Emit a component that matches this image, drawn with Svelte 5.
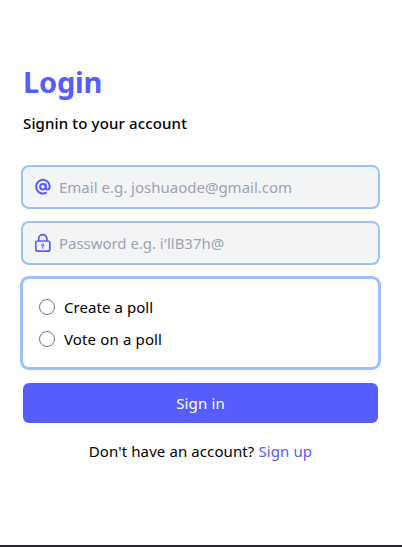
<script>
  let email = $state('');
  let password = $state('');
  let action = $state('');
</script>

<main>
  <h1>Login</h1>
  <h2>Signin to your account</h2>
  <form onsubmit={(e) => e.preventDefault()}>
    <label class="field">
      <svg width="18" height="18" viewBox="0 0 18 18" fill="none" stroke="currentColor" stroke-width="2">
        <circle cx="8.9" cy="8.7" r="2.8" />
        <path d="M11.7 5.4v4.5c0 2.5 4 2.2 4-1.5A6.8 6.8 0 1 0 12.7 14.3" />
      </svg>
      <input class="mail" type="text" placeholder="Email e.g. joshuaode@gmail.com" bind:value={email} />
    </label>
    <label class="field">
      <svg width="18" height="20" viewBox="0 0 18 20" fill="none" stroke="currentColor" stroke-width="1.7">
        <rect x="1.8" y="8" width="14" height="10.2" rx="2" />
        <path d="M4.7 8V5.8a4.1 4.1 0 0 1 8.2 0V8" />
        <circle cx="8.8" cy="12" r="1.2" stroke-width="1" />
        <path d="M8.8 13.2v2.6" stroke-width="1.1" />
      </svg>
      <input class="pass" type="text" placeholder="Password e.g. i'llB37h@" bind:value={password} />
    </label>
    <div class="choices">
      <label><input type="radio" value="create" bind:group={action} /><span class="create">Create a poll</span></label>
      <label><input type="radio" value="vote" bind:group={action} /><span class="vote">Vote on a poll</span></label>
    </div>
    <button>Sign in</button>
  </form>
  <p><span class="ask">Don't have an account?</span> <a href="#signup">Sign up</a></p>
</main>

<style>
  :global(body) { background: #fff; }
  main {
    box-sizing: border-box;
    height: 547px;
    padding: 64px 24px 0 23px;
    border-bottom: 2px solid #25262b;
    font: 15px/24px "Noto Sans", "Open Sans", sans-serif;
    color: #000;
  }
  h1 { margin: 0; font-size: 29px; line-height: 36px; font-weight: 700; letter-spacing: -0.2px; color: #575dfb; }
  h2 { margin: 11px 0 32px; font-size: 15px; line-height: 24px; font-weight: 500; letter-spacing: 0.14px; }
  form { display: flex; flex-direction: column; gap: 16px; }
  .field {
    display: flex;
    align-items: center;
    gap: 7px;
    height: 40px;
    padding-left: 11px;
    box-sizing: border-box;
    border-radius: 6px;
    background: #f3f4f6;
    box-shadow: 0 0 0 2px #9dbffc;
    color: #575dfb;
  }
  .field svg { flex: none; }
  .field input {
    flex: 1;
    min-width: 0;
    height: 24px;
    padding: 0;
    border: 0;
    outline: 0;
    background: transparent;
    font: inherit;
    color: #000;
  }
  input::placeholder { color: #9ca3af; opacity: 1; }
  .pass { letter-spacing: -0.04px; }
  .choices {
    display: flex;
    flex-direction: column;
    gap: 8px;
    box-sizing: border-box;
    height: 88px;
    padding: 16px;
    border-radius: 6px;
    box-shadow: 0 0 0 3px #9dbffc;
  }
  .choices label { display: flex; align-items: center; gap: 9px; height: 24px; }
  .choices input {
    appearance: none;
    box-sizing: border-box;
    width: 16px;
    height: 16px;
    margin: 0;
    border: 1px solid #767676;
    border-radius: 50%;
    background: #fff;
  }
  .choices input:checked { border: 5px solid #575dfb; }
  .create { letter-spacing: 0.06px; }
  .vote { letter-spacing: 0.14px; }
  button {
    height: 40px;
    padding: 0;
    border: 0;
    border-radius: 6px;
    background: #575dfb;
    color: #fff;
    font: inherit;
    letter-spacing: 0.15px;
  }
  p { margin: 16px 0 0; text-align: center; letter-spacing: 0.1px; }
  a { color: #575dfb; text-decoration: none; }
</style>
